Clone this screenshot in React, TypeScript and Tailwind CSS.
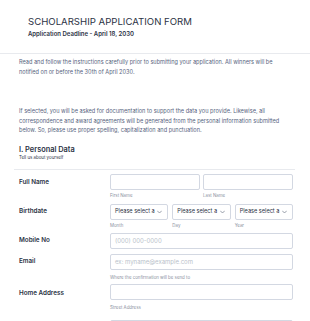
import React from "react";

const label = "w-[91px] shrink-0 text-[6.3px] font-semibold text-[#2c3345]";
const box = "h-[16px] rounded-[2px] border border-[#d3d8e2] bg-white";
const sub = "text-[4.4px] leading-[6px] text-[#8a91a0] whitespace-nowrap";

function Select() {
  return (
    <div className={`${box} h-[15px] flex items-center justify-between pl-[4px] pr-[5px] overflow-hidden`}>
      <span className="text-[5.6px] whitespace-nowrap text-[#2c3345]">Please select a</span>
      <svg width="5" height="4" viewBox="0 0 10 6" fill="none" className="shrink-0">
        <path d="M1 1l4 4 4-4" stroke="#6f7787" strokeWidth="1.4" strokeLinecap="round" strokeLinejoin="round" />
      </svg>
    </div>
  );
}

export default function App() {
  return (
    <div className="w-[310px] h-[321px] overflow-hidden bg-white font-['Inter',sans-serif]">
      {/* Header */}
      <div className="h-[54px] border-b border-[#e8eaee] pl-[28px] pt-[16px]">
        <h1 className="text-[9.6px] leading-[12px] text-[#2c3345]">
          SCHOLARSHIP APPLICATION FORM
        </h1>
        <p className="mt-[2px] text-[6px] leading-[8px] font-semibold text-[#2c3345]">
          Application Deadline - April 18, 2030
        </p>
      </div>

      {/* Intro */}
      <div className="pl-[19px] pr-[10px] pt-[3px] text-[5.6px] leading-[10px] text-[#57647e] whitespace-nowrap">
        <p>
          Read and follow the instructions carefully prior to submitting your application. All winners will be
          <br />
          notified on or before the 30th of April 2030.
        </p>
        <p className="mt-[30px] leading-[9.5px]">
          If selected, you will be asked for documentation to support the data you provide. Likewise, all
          <br />
          correspondence and award agreements will be generated from the personal information submitted
          <br />
          below. So, please use proper spelling, capitalization and punctuation.
        </p>
        <h2 className="mt-[9px] text-[7.4px] leading-[10px] font-semibold text-[#2c3345]">I. Personal Data</h2>
        <p className="text-[4.4px] leading-[6px] text-[#2c3345]">Tell us about yourself</p>
      </div>

      {/* Fields */}
      <div className="pl-[14px] pr-[15px] mt-[8px]">
        <div className="border-t border-[#e8eaee]" />
        <div className="pl-[5px] pr-[2px]">
          {/* Full Name */}
          <div className="flex mt-[4px]">
            <div className={`${label} leading-[16px]`}>Full Name</div>
            <div className="flex-1 grid grid-cols-2 gap-x-[3px] gap-y-[3px]">
              <div className={box} />
              <div className={box} />
              <div className={sub}>First Name</div>
              <div className={sub}>Last Name</div>
            </div>
          </div>

          {/* Birthdate */}
          <div className="flex mt-[5px]">
            <div className={`${label} leading-[15px]`}>Birthdate</div>
            <div className="flex-1 grid grid-cols-3 gap-x-[4px] gap-y-[3px]">
              <Select />
              <Select />
              <Select />
              <div className={sub}>Month</div>
              <div className={sub}>Day</div>
              <div className={sub}>Year</div>
            </div>
          </div>

          {/* Mobile */}
          <div className="flex mt-[4px]">
            <div className={`${label} leading-[15px]`}>Mobile No</div>
            <div className={`${box} h-[15px] flex-1 flex items-center pl-[4px] text-[6px] text-[#b9bfca]`}>
              (000) 000-0000
            </div>
          </div>

          {/* Email */}
          <div className="flex mt-[5px]">
            <div className={`${label} leading-[15px]`}>Email</div>
            <div className="flex-1 flex flex-col gap-[5px]">
              <div className={`${box} h-[15px] flex items-center pl-[4px] text-[6px] text-[#b9bfca]`}>
                ex: myname@example.com
              </div>
              <div className={sub}>Where the confirmation will be send to</div>
            </div>
          </div>

          {/* Home Address */}
          <div className="flex mt-[3px]">
            <div className={`${label} leading-[18px]`}>Home Address</div>
            <div className="flex-1 flex flex-col">
              <div className={`${box} h-[15px]`} />
              <div className={`${sub} mt-[5px]`}>Street Address</div>
              <div className={`${box} h-[15px] mt-[9px]`} />
            </div>
          </div>
        </div>
      </div>
    </div>
  );
}
